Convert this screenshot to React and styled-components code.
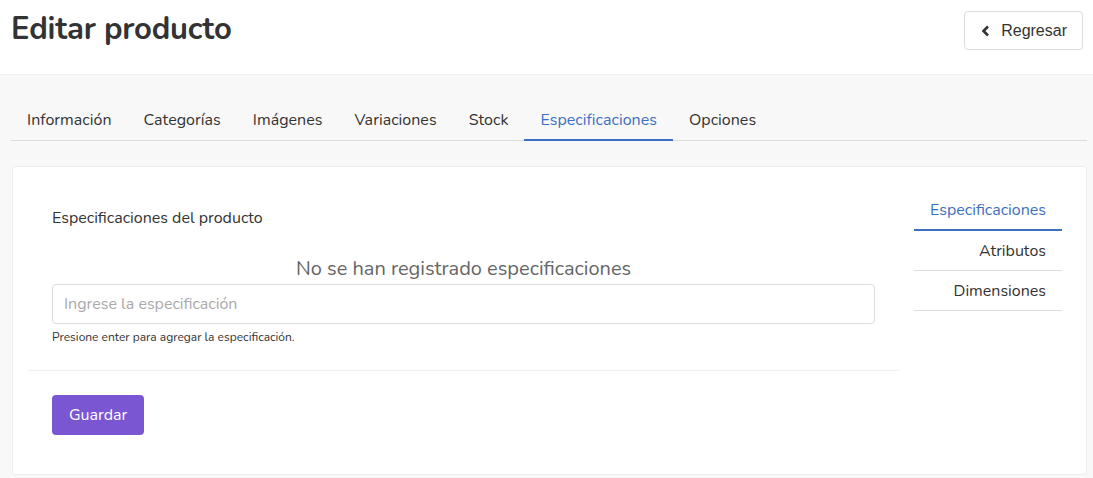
import React from "react";
import styled, { createGlobalStyle } from "styled-components";

const Global = createGlobalStyle`
  html, body { margin: 0; padding: 0; background: #f8f8f8; }
  body { font-family: "Nunito", "Lato", "Open Sans", sans-serif; color: #333; }
  * { box-sizing: border-box; }
`;

const Header = styled.header`
  height: 75px;
  background: #fff;
  display: flex;
  align-items: flex-start;
  justify-content: space-between;
  padding: 11px 10px 0 11px;
  border-bottom: 1px solid #f0f0f0;
`;

const Title = styled.h1`
  margin: 0;
  font-size: 31px;
  font-weight: 700;
  color: #333;
  line-height: 36px;
  letter-spacing: -0.2px;
`;

const BackButton = styled.button`
  display: flex;
  align-items: center;
  gap: 10px;
  height: 39px;
  padding: 0 15px 0 16px;
  background: #fff;
  border: 1px solid #dcdcdc;
  border-radius: 4px;
  font-family: "Liberation Sans", Arial, sans-serif;
  font-size: 16px;
  color: #333;
`;

const Main = styled.main`
  padding: 26px 6px 0 11px;
`;

const Tabs = styled.nav`
  display: flex;
  border-bottom: 1px solid #dcdcdc;
`;

const Tab = styled.div`
  padding: 0 16px;
  height: 40px;
  display: flex;
  align-items: center;
  font-size: 16px;
  letter-spacing: 0.03px;
  color: ${(p) => (p.$active ? "#3d6fc1" : "#333")};
  border-bottom: 2px solid ${(p) => (p.$active ? "#3d6fc1" : "transparent")};
  margin-bottom: -1px;
`;

const Card = styled.section`
  margin-top: 25px;
  margin-left: 1px;
  background: #fff;
  border: 1px solid #eee;
  border-radius: 4px;
  min-height: 309px;
  display: flex;
  padding: 24px 24px 0 15px;
`;

const Left = styled.div`
  width: 872px;
`;

const FormArea = styled.div`
  padding: 18px 24px 26px 24px;
  border-bottom: 1px solid #f0f0f0;
`;

const Label = styled.div`
  font-size: 16px;
  line-height: 18px;
  color: #333;
  margin-bottom: 31px;
`;

const Empty = styled.div`
  text-align: center;
  font-size: 20px;
  line-height: 22px;
  color: #666;
  margin-bottom: 4px;
`;

const Input = styled.input`
  width: 100%;
  height: 40px;
  border: 1px solid #dcdcdc;
  border-radius: 4px;
  padding: 0 11px;
  font-family: inherit;
  font-size: 16px;
  color: #333;
  &::placeholder { color: #aaa; }
  outline: none;
`;

const Help = styled.div`
  font-size: 12px;
  line-height: 14px;
  color: #333;
  margin-top: 6px;
`;

const Actions = styled.div`
  padding: 24px 24px 38px;
`;

const SaveButton = styled.button`
  height: 40px;
  padding: 0 17px;
  background: #7a56d3;
  border: none;
  border-radius: 4px;
  color: #fff;
  font-family: inherit;
  font-size: 16px;
`;

const SideNav = styled.nav`
  margin-left: 15px;
  width: 148px;
  display: flex;
  flex-direction: column;
`;

const SideItem = styled.div`
  height: 40px;
  display: flex;
  align-items: center;
  justify-content: flex-end;
  padding-right: 16px;
  font-size: 16px;
  color: ${(p) => (p.$active ? "#3d6fc1" : "#333")};
  border-bottom: ${(p) => (p.$active ? "2px solid #3d6fc1" : "1px solid #dcdcdc")};
`;

const tabs = ["Información", "Categorías", "Imágenes", "Variaciones", "Stock", "Especificaciones", "Opciones"];
const side = ["Especificaciones", "Atributos", "Dimensiones"];

export default function App() {
  return (
    <>
      <Global />
      <Header>
        <Title>Editar producto</Title>
        <BackButton>
          <svg width="10" height="12" viewBox="0 0 10 12">
            <path d="M7 1.5 L2.5 6 L7 10.5" fill="none" stroke="#333" strokeWidth="2.6" />
          </svg>
          Regresar
        </BackButton>
      </Header>
      <Main>
        <Tabs>
          {tabs.map((t) => (
            <Tab key={t} $active={t === "Especificaciones"}>{t}</Tab>
          ))}
        </Tabs>
        <Card>
          <Left>
            <FormArea>
              <Label>Especificaciones del producto</Label>
              <Empty>No se han registrado especificaciones</Empty>
              <Input placeholder="Ingrese la especificación" />
              <Help>Presione enter para agregar la especificación.</Help>
            </FormArea>
            <Actions>
              <SaveButton>Guardar</SaveButton>
            </Actions>
          </Left>
          <SideNav>
            {side.map((s, i) => (
              <SideItem key={s} $active={i === 0}>{s}</SideItem>
            ))}
          </SideNav>
        </Card>
      </Main>
    </>
  );
}
